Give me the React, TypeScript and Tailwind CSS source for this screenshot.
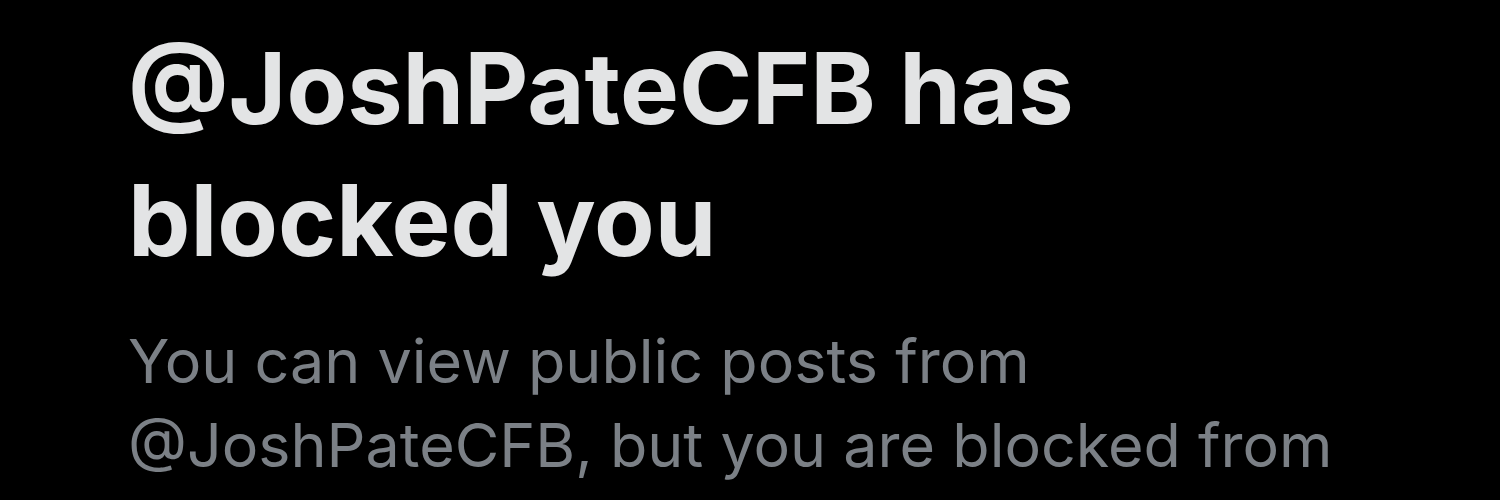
export default function App() {
  return (
    <div className="h-[500px] w-[1500px] overflow-hidden bg-black pl-[128px] pt-[22px] font-['Inter',sans-serif]">
      <h1 className="text-[99px] font-bold leading-[132px] text-[#e3e4e5]">
        @JoshPateCFB has
        <br />
        blocked you
      </h1>
      <p className="mt-[33px] text-[61px] leading-[84px] text-[#7b8086]">
        You can view public posts from
        <br />
        @JoshPateCFB, but you are blocked from
      </p>
    </div>
  );
}
